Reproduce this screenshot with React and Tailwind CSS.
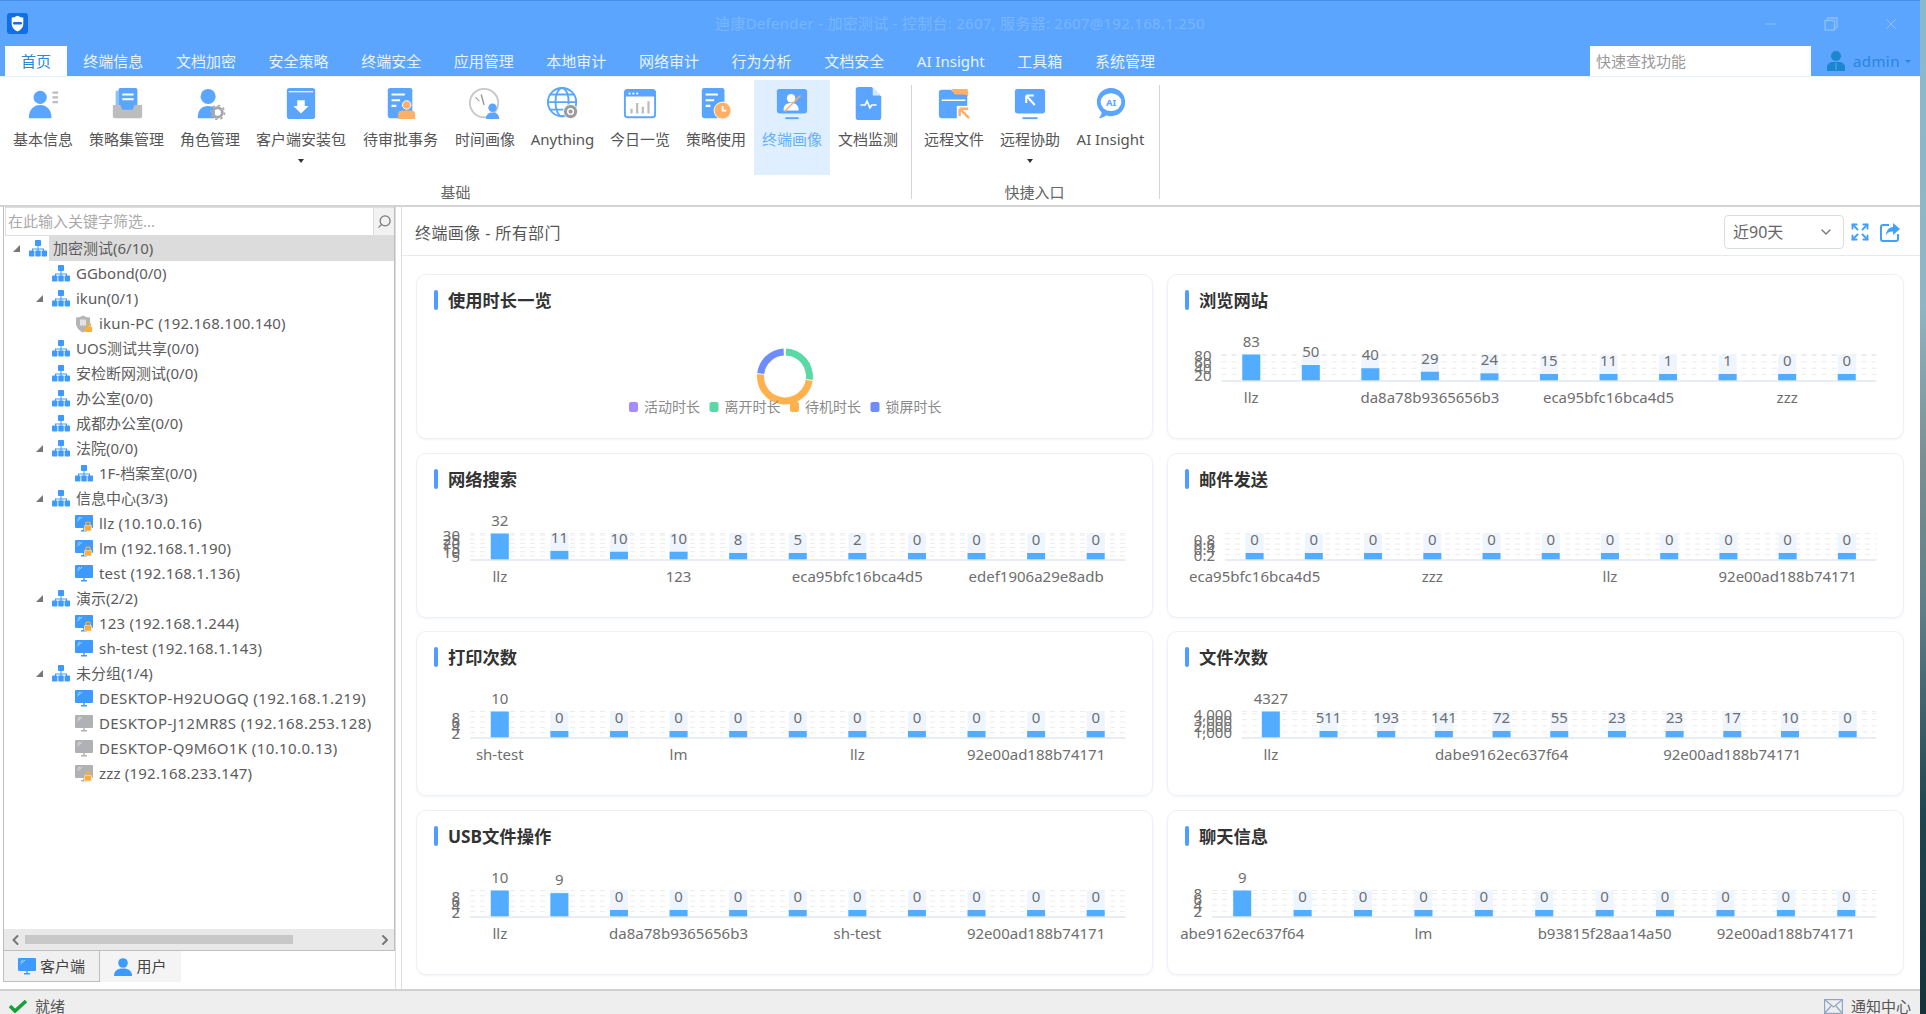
import { ChevronDown, Expand, ChevronLeft, ChevronRight, Search, Minus, X } from 'lucide-react';

const BLUE = '#5aa5ff';
const ORANGE = '#ffb066';
const GRAY = '#bdbdbd';

const menuTabs = ['终端信息', '文档加密', '安全策略', '终端安全', '应用管理', '本地审计', '网络审计', '行为分析', '文档安全', 'AI Insight', '工具箱', '系统管理'];

function PersonShape({ x = 0, y = 0, color = BLUE, s = 1 }) {
  return (
    <g transform={`translate(${x} ${y}) scale(${s})`} fill={color}>
      <circle cx="12" cy="8" r="7" />
      <path d="M0 30c0-9 5-14 12-14s12 5 12 14z" />
    </g>
  );
}

function Gear({ x, y, color = '#a8a8a8' }) {
  return (
    <g transform={`translate(${x} ${y})`}>
      <circle cx="0" cy="0" r="5" fill="none" stroke={color} strokeWidth="3" />
      <circle cx="0" cy="0" r="7.4" fill="none" stroke={color} strokeWidth="1.8" strokeDasharray="2.6 3.2" />
    </g>
  );
}

const ribbonIcons = {
  info: (
    <>
      <PersonShape x={3} y={3} s={1} />
      <path d="M28 6h6M28 11h6M28 16h6" stroke={GRAY} strokeWidth="2.4" />
    </>
  ),
  policy: (
    <>
      <rect x="9" y="1" width="20" height="24" rx="2" fill={BLUE} />
      <rect x="6" y="4" width="3" height="18" fill={BLUE} opacity="0.7" />
      <path d="M13 8h12M13 13h12" stroke="#fff" strokeWidth="2" />
      <path d="M3 19h8l2 5h11l2-5h8v12a2 2 0 0 1-2 2H5a2 2 0 0 1-2-2z" fill="#bdbdbd" />
    </>
  ),
  role: (
    <>
      <circle cx="16" cy="10" r="8" fill={BLUE} />
      <path d="M5 33c0-9 4-13 11-13 3 0 5 1 7 2v11z" fill={BLUE} />
      <Gear x={26} y={27} />
    </>
  ),
  package: (
    <>
      <path d="M3 4a3 3 0 0 1 3-3h24a3 3 0 0 1 3 3v27a3 3 0 0 1-3 3H6a3 3 0 0 1-3-3z" fill={BLUE} />
      <path d="M5 5h26" stroke="#fff" strokeWidth="1.2" />
      <path d="M14 14h8v6h4l-8 8-8-8h4z" fill="#fff" />
    </>
  ),
  approve: (
    <>
      <rect x="4" y="1" width="26" height="32" rx="2.5" fill={BLUE} />
      <path d="M8 8h14M8 14h9M8 20h5" stroke="#fff" strokeWidth="2.2" />
      <circle cx="24" cy="19" r="4.5" fill={ORANGE} stroke="#fff" strokeWidth="1" />
      <path d="M15 34v-5c0-3 2-4 5-4h8c3 0 5 1 5 4v5z" fill={ORANGE} />
    </>
  ),
  clock: (
    <>
      <circle cx="17" cy="17" r="15" fill="none" stroke="#c8c8c8" strokeWidth="2" />
      <path d="M14 8l3 11" stroke="#9a9a9a" strokeWidth="1.5" />
      <path d="M8 11l4 4" stroke="#9a9a9a" strokeWidth="1.2" />
      <circle cx="26" cy="22" r="4.5" fill={BLUE} />
      <path d="M19 34c0-5 3-7 7-7s7 2 7 7z" fill={BLUE} />
    </>
  ),
  globe: (
    <>
      <g fill="none" stroke={BLUE} strokeWidth="2">
        <circle cx="17" cy="16" r="15" />
        <ellipse cx="17" cy="16" rx="7" ry="15" />
        <path d="M2 16h30M4 8h26M4 24h26" />
      </g>
      <circle cx="26" cy="26" r="7.5" fill="#9b9b9b" stroke="#fff" />
      <circle cx="26" cy="26" r="3" fill="none" stroke="#fff" strokeWidth="1.5" />
    </>
  ),
  today: (
    <>
      <rect x="2" y="3" width="32" height="29" rx="3" fill="none" stroke={BLUE} strokeWidth="2" />
      <path d="M2 6a3 3 0 0 1 3-3h26a3 3 0 0 1 3 3v4H2z" fill={BLUE} />
      <circle cx="7" cy="7" r="1.2" fill="#fff" />
      <circle cx="11" cy="7" r="1.2" fill="#fff" />
      <circle cx="15" cy="7" r="1.2" fill="#fff" />
      <path d="M9 28v-5M15 28V17M21 28v-7M27 28V15" stroke="#bdbdbd" strokeWidth="2.4" />
    </>
  ),
  usage: (
    <>
      <rect x="3" y="1" width="24" height="32" rx="2.5" fill={BLUE} />
      <path d="M7 8h13M7 14h9M7 20h5" stroke="#fff" strokeWidth="2.2" />
      <circle cx="25" cy="25" r="9" fill={ORANGE} stroke="#fff" />
      <path d="M25 20v5h4" fill="none" stroke="#fff" strokeWidth="1.8" />
    </>
  ),
  portrait: (
    <>
      <rect x="2" y="2" width="32" height="26" rx="2.5" fill={BLUE} />
      <path d="M11 33h14" stroke={BLUE} strokeWidth="2" />
      <circle cx="17" cy="12" r="4.5" fill="#fff" />
      <path d="M9 25c0-6 3-8 8-8s8 2 8 8z" fill="#fff" />
      <path d="M10 26L27 9" stroke={ORANGE} strokeWidth="1.5" />
    </>
  ),
  monitorDoc: (
    <>
      <path d="M5 3a3 3 0 0 1 3-3h14l10 10v22a3 3 0 0 1-3 3H8a3 3 0 0 1-3-3z" fill={BLUE} />
      <path d="M23 0l9 9h-9z" fill="#d6e8ff" />
      <path d="M10 19h5l2-4 3 7 2-3h5" fill="none" stroke="#fff" strokeWidth="1.7" />
    </>
  ),
  remoteFile: (
    <>
      <path d="M16 2h15a2 2 0 0 1 2 2v6H16z" fill={ORANGE} />
      <path d="M2 6a3 3 0 0 1 3-3h10l4 5h10a3 3 0 0 1 3 3v19a3 3 0 0 1-3 3H5a3 3 0 0 1-3-3z" fill={BLUE} />
      <path d="M5 14h25" stroke="#fff" strokeWidth="1.6" />
      <rect x="21" y="20" width="15" height="15" fill="#fff" />
      <path d="M24 23h9M24 23v8M24 23l10 10" fill="none" stroke={ORANGE} strokeWidth="2.6" />
    </>
  ),
  remoteHelp: (
    <>
      <rect x="2" y="2" width="32" height="26" rx="2.5" fill={BLUE} />
      <path d="M10 33h16" stroke={BLUE} strokeWidth="2" />
      <path d="M14 9v8M14 9h8M14 9l9 10" fill="none" stroke="#fff" strokeWidth="2.2" />
    </>
  ),
  ai: (
    <>
      <path d="M18 1c9 0 15 7 15 15s-6 15-15 15c-2 0-3 0-5-1-2 2-5 3-8 3 2-2 3-4 3-6-3-3-5-7-5-11C3 8 9 1 18 1z" fill={BLUE} />
      <ellipse cx="18" cy="16" rx="11" ry="9.5" fill="#fff" />
      <text x="18" y="20" textAnchor="middle" fontSize="10" fontWeight="700" fill={BLUE}>AI</text>
    </>
  ),
};

function RibbonItem({ icon, label, menu, active, width }) {
  return (
    <div className={`flex h-[95px] flex-col items-center pt-[7px] ${width} ${active ? 'bg-[#e0efff]' : ''}`}>
      <svg width="36" height="34" viewBox="0 0 36 36">{ribbonIcons[icon]}</svg>
      <div className={`mt-[8px] whitespace-nowrap text-[15px] leading-[20px] ${active ? 'text-[#62b0ff]' : 'text-[#555]'}`}>{label}</div>
      {menu && <div className="mt-[10px] h-0 w-0 border-x-[3px] border-t-[4px] border-x-transparent border-t-[#333]" />}
    </div>
  );
}

function TreeIcon() {
  return (
    <svg width="18" height="17" viewBox="0 0 18 17" className="shrink-0" fill="#3d9bff">
      <rect x="6" y="0" width="6" height="6" rx="0.8" />
      <path d="M8.5 6h1v2.5H15V11h-1V9.5H9.5V11h-1V9.5H4V11H3V8.5h5.5z" />
      <rect x="0" y="10.5" width="5.4" height="6" rx="0.8" />
      <rect x="6.3" y="10.5" width="5.4" height="6" rx="0.8" />
      <rect x="12.6" y="10.5" width="5.4" height="6" rx="0.8" />
    </svg>
  );
}

function PcIcon({ color = '#3d9bff', lock }) {
  return (
    <svg width="18" height="17" viewBox="0 0 18 17" className="shrink-0">
      <rect x="0" y="0" width="18" height="13" rx="1" fill={color} />
      <path d="M2.5 6L7 2M2.5 4L5 2" stroke="#fff" strokeOpacity="0.65" strokeWidth="0.9" />
      <path d="M6 15.7h6M9 13v3" stroke={color} strokeWidth="1.4" />
      {lock && (
        <>
          <path d="M10.8 10.5V9a2.2 2.2 0 0 1 4.4 0v1.500" fill="none" stroke="#ffad33" strokeWidth="1.2" />
          <rect x="9.500" y="10.300" width="7" height="5.700" rx="0.8" fill="#ffad33" stroke="#fff" strokeWidth="0.5" />
        </>
      )}
    </svg>
  );
}

function ShieldIcon() {
  return (
    <svg width="18" height="18" viewBox="0 0 18 18" className="shrink-0">
      <path d="M1 2.500C4 2.500 6 1.500 8 .5c2 1 4 2 7 2v6c0 4-3 7-7 9-4-2-7-5-7-9z" fill="#b5b5b5" />
      <rect x="5" y="4.500" width="6" height="6" fill="#e3e3e3" />
      <rect x="10" y="11.500" width="7" height="5.500" rx="0.8" fill="#ffad33" />
      <path d="M11.500 11.500V10a2 2 0 0 1 4 0v1.500" fill="none" stroke="#ffad33" strokeWidth="1.100" />
    </svg>
  );
}

const treeRows = [
  { level: 0, arrow: true, kind: 'org', label: '加密测试(6/10)', selected: true },
  { level: 1, kind: 'org', label: 'GGbond(0/0)' },
  { level: 1, arrow: true, kind: 'org', label: 'ikun(0/1)' },
  { level: 2, kind: 'shield', label: 'ikun-PC (192.168.100.140)' },
  { level: 1, kind: 'org', label: 'UOS测试共享(0/0)' },
  { level: 1, kind: 'org', label: '安检断网测试(0/0)' },
  { level: 1, kind: 'org', label: '办公室(0/0)' },
  { level: 1, kind: 'org', label: '成都办公室(0/0)' },
  { level: 1, arrow: true, kind: 'org', label: '法院(0/0)' },
  { level: 2, kind: 'org', label: '1F-档案室(0/0)' },
  { level: 1, arrow: true, kind: 'org', label: '信息中心(3/3)' },
  { level: 2, kind: 'pc', lock: true, label: 'llz (10.10.0.16)' },
  { level: 2, kind: 'pc', lock: true, label: 'lm (192.168.1.190)' },
  { level: 2, kind: 'pc', label: 'test (192.168.1.136)' },
  { level: 1, arrow: true, kind: 'org', label: '演示(2/2)' },
  { level: 2, kind: 'pc', lock: true, label: '123 (192.168.1.244)' },
  { level: 2, kind: 'pc', label: 'sh-test (192.168.1.143)' },
  { level: 1, arrow: true, kind: 'org', label: '未分组(1/4)' },
  { level: 2, kind: 'pc', wide: true, label: 'DESKTOP-H92UOGQ (192.168.1.219)' },
  { level: 2, kind: 'pc', wide: true, gray: true, label: 'DESKTOP-J12MR8S (192.168.253.128)' },
  { level: 2, kind: 'pc', wide: true, gray: true, label: 'DESKTOP-Q9M6O1K (10.10.0.13)' },
  { level: 2, kind: 'pc', gray: true, lock: true, label: 'zzz (192.168.233.147)' },
];

const levelPad = ['pl-[6px]', 'pl-[29px]', 'pl-[52px]'];

function TreeRow({ row }) {
  let spacing = '';
  if (row.wide) spacing = 'tracking-[0.4px]';
  else if (row.kind !== 'org') spacing = 'tracking-[0.2px]';
  return (
    <div className={`flex h-[25px] items-center ${levelPad[row.level]}`}>
      <div className="flex w-3 shrink-0 justify-center">
        {row.arrow && (
          <svg width="7" height="7" viewBox="0 0 7 7">
            <polygon points="7,0 7,7 0,7" fill="#777" />
          </svg>
        )}
      </div>
      <div className="ml-[7px] flex w-[18px] shrink-0 justify-center">
        {row.kind === 'org' && <TreeIcon />}
        {row.kind === 'shield' && <ShieldIcon />}
        {row.kind === 'pc' && <PcIcon color={row.gray ? '#afb1b5' : '#3d9bff'} lock={row.lock} />}
      </div>
      <div className={`ml-[2px] flex h-[25px] flex-1 items-center whitespace-nowrap pl-[4px] text-[15px] text-[#5c5c5c] ${spacing} ${row.selected ? 'bg-[#dcdcdc]' : ''}`}>
        {row.label}
      </div>
    </div>
  );
}

function Sidebar() {
  return (
    <div className="flex w-[396px] shrink-0 flex-col border-r border-[#dcdcdc] pl-[3px]">
      <div className="flex h-[744px] w-[392px] flex-col border-x border-b border-[#bfbfbf]">
        <div className="flex h-[29px] shrink-0 pl-[1px]">
          <div className="flex flex-1 items-center border border-[#dedede] pl-[2px] text-[15px] text-[#aaa]">在此输入关键字筛选...</div>
          <div className="flex w-[20px] items-center justify-center border-y border-[#dedede] bg-[#f2f2f2]">
            <Search size={15} strokeWidth={2} className="-scale-x-100 text-[#777]" />
          </div>
        </div>
        <div className="flex-1 overflow-hidden">
          {treeRows.map((row) => (
            <TreeRow key={row.label} row={row} />
          ))}
        </div>
        <div className="flex h-[21px] shrink-0 items-center bg-[#e9e9e9]">
          <ChevronLeft size={16} strokeWidth={3} className="ml-[2px] w-[19px] text-[#777]" />
          <div className="h-[9px] w-[268px] bg-[#c8c8c8]" />
          <div className="flex-1" />
          <ChevronRight size={16} strokeWidth={3} className="mr-[1px] text-[#777]" />
        </div>
      </div>
      <div className="flex h-[31px]">
        <div className="flex w-[97px] items-center justify-center gap-[4px] border-x border-b border-[#bfbfbf] bg-[#f0f0f0] text-[15px] text-[#444]">
          <PcIcon color="#3d9bff" />
          客户端
        </div>
        <div className="flex w-[81px] items-center justify-center gap-[4px] bg-[#f4f4f4] text-[15px] text-[#444]">
          <svg width="18" height="18" viewBox="0 0 18 18" fill="#3d9bff">
            <circle cx="9" cy="5" r="4.800" />
            <path d="M0 18c0-5 3-7.500 9-7.500s9 2.500 9 7.500z" />
          </svg>
          用户
        </div>
      </div>
    </div>
  );
}

function polar(cx, cy, r, deg) {
  const a = ((deg - 90) * Math.PI) / 180;
  return [cx + r * Math.cos(a), cy + r * Math.sin(a)];
}

function arcPath(cx, cy, r1, r2, from, to) {
  const large = to - from > 180 ? 1 : 0;
  const [x1, y1] = polar(cx, cy, r2, from);
  const [x2, y2] = polar(cx, cy, r2, to);
  const [x3, y3] = polar(cx, cy, r1, to);
  const [x4, y4] = polar(cx, cy, r1, from);
  return `M${x1} ${y1}A${r2} ${r2} 0 ${large} 1 ${x2} ${y2}L${x3} ${y3}A${r1} ${r1} 0 ${large} 0 ${x4} ${y4}Z`;
}

const legend = [
  { name: '活动时长', color: '#a78bfa' },
  { name: '离开时长', color: '#5ad8a6' },
  { name: '待机时长', color: '#ffb14e' },
  { name: '锁屏时长', color: '#6d8cff' },
];

function Donut() {
  return (
    <svg viewBox="0 0 735 118" className="block h-[118px] w-full">
      <path d={arcPath(368, 57.5, 21, 28, 2, 97)} fill="#5ad8a6" />
      <path d={arcPath(368, 57.5, 21, 28, 99, 275)} fill="#ffb14e" />
      <path d={arcPath(368, 57.5, 21, 28, 277, 357)} fill="#6d8cff" />
      {legend.map((item, i) => (
        <g key={item.name}>
          <rect x={212 + i * 80.5} y={83} width={9} height={10} rx={2} fill={item.color} />
          <text x={227 + i * 80.5} y={87.5} fontSize="14" fill="#8a8a8a" dominantBaseline="central">
            {item.name}
          </text>
        </g>
      ))}
    </svg>
  );
}

const PLOT_TOP = 35.5;
const PLOT_BASE = 62;
const PLOT_END = 708.5;

function BarChart({ start, max, ticks, values, labels }) {
  const plotH = PLOT_BASE - PLOT_TOP;
  const cell = (PLOT_END - start) / values.length;
  return (
    <svg viewBox="0 0 735 118" className="block h-[118px] w-full">
      {ticks.map((t) => {
        const y = PLOT_BASE - (t.v / max) * plotH;
        return (
          <g key={t.label}>
            <line x1={start} x2={PLOT_END} y1={y} y2={y} stroke="#ececec" strokeDasharray="5 5" />
            <text x={start - 10} y={y} textAnchor="end" fontSize="15" fill="#6e6e6e" dominantBaseline="central">
              {t.label}
            </text>
          </g>
        );
      })}
      <line x1={start} x2={PLOT_END} y1={PLOT_TOP} y2={PLOT_TOP} stroke="#ececec" strokeDasharray="5 5" />
      {values.map((v, i) => {
        const cx = start + cell * (i + 0.5);
        const h = Math.max(7, (v / max) * plotH);
        const top = PLOT_BASE - h;
        return (
          <g key={i}>
            <rect x={cx - 9} y={PLOT_TOP} width={18} height={plotH} fill="#eef5ff" />
            <rect x={cx - 9} y={top} width={18} height={h} fill="#52acff" />
            <text x={cx} y={top - 14} textAnchor="middle" fontSize="15" fill="#6e6e6e" dominantBaseline="central">
              {v}
            </text>
          </g>
        );
      })}
      <line x1={start} x2={PLOT_END} y1={PLOT_BASE} y2={PLOT_BASE} stroke="#e0e6f1" strokeWidth="1.5" />
      {labels.map((l) => (
        <text key={l.i} x={start + cell * (l.i + 0.5)} y={PLOT_BASE + 15.5} textAnchor="middle" fontSize="15" fill="#6e6e6e" dominantBaseline="central">
          {l.text}
        </text>
      ))}
    </svg>
  );
}

const ZERO10 = [0, 0, 0, 0, 0, 0, 0, 0, 0, 0];
const t8642 = [
  { v: 2, label: '2' },
  { v: 4, label: '4' },
  { v: 6, label: '6' },
  { v: 8, label: '8' },
];

const cards = [
  { title: '使用时长一览', donut: true },
  {
    title: '浏览网站',
    start: 53.5,
    max: 83,
    ticks: [
      { v: 20, label: '20' },
      { v: 40, label: '40' },
      { v: 60, label: '60' },
      { v: 80, label: '80' },
    ],
    values: [83, 50, 40, 29, 24, 15, 11, 1, 1, 0, 0],
    labels: [
      { i: 0, text: 'llz' },
      { i: 3, text: 'da8a78b9365656b3' },
      { i: 6, text: 'eca95bfc16bca4d5' },
      { i: 9, text: 'zzz' },
    ],
  },
  {
    title: '网络搜索',
    start: 53,
    max: 32,
    ticks: [
      { v: 5, label: '5' },
      { v: 10, label: '10' },
      { v: 15, label: '15' },
      { v: 20, label: '20' },
      { v: 25, label: '25' },
      { v: 30, label: '30' },
    ],
    values: [32, 11, 10, 10, 8, 5, 2, 0, 0, 0, 0],
    labels: [
      { i: 0, text: 'llz' },
      { i: 3, text: '123' },
      { i: 6, text: 'eca95bfc16bca4d5' },
      { i: 9, text: 'edef1906a29e8adb' },
    ],
  },
  {
    title: '邮件发送',
    start: 57,
    max: 1,
    ticks: [
      { v: 0.2, label: '0.2' },
      { v: 0.4, label: '0.4' },
      { v: 0.6, label: '0.6' },
      { v: 0.8, label: '0.8' },
    ],
    values: [0, ...ZERO10],
    labels: [
      { i: 0, text: 'eca95bfc16bca4d5' },
      { i: 3, text: 'zzz' },
      { i: 6, text: 'llz' },
      { i: 9, text: '92e00ad188b74171' },
    ],
  },
  {
    title: '打印次数',
    start: 53,
    max: 10,
    ticks: t8642,
    values: [10, ...ZERO10],
    labels: [
      { i: 0, text: 'sh-test' },
      { i: 3, text: 'lm' },
      { i: 6, text: 'llz' },
      { i: 9, text: '92e00ad188b74171' },
    ],
  },
  {
    title: '文件次数',
    start: 74,
    max: 4327,
    ticks: [
      { v: 1000, label: '1,000' },
      { v: 2000, label: '2,000' },
      { v: 3000, label: '3,000' },
      { v: 4000, label: '4,000' },
    ],
    values: [4327, 511, 193, 141, 72, 55, 23, 23, 17, 10, 0],
    labels: [
      { i: 0, text: 'llz' },
      { i: 4, text: 'dabe9162ec637f64' },
      { i: 8, text: '92e00ad188b74171' },
    ],
  },
  {
    title: 'USB文件操作',
    start: 53,
    max: 10,
    ticks: t8642,
    values: [10, 9, 0, 0, 0, 0, 0, 0, 0, 0, 0],
    labels: [
      { i: 0, text: 'llz' },
      { i: 3, text: 'da8a78b9365656b3' },
      { i: 6, text: 'sh-test' },
      { i: 9, text: '92e00ad188b74171' },
    ],
  },
  {
    title: '聊天信息',
    start: 44,
    max: 9,
    ticks: t8642,
    values: [9, ...ZERO10],
    labels: [
      { i: 0, text: 'abe9162ec637f64' },
      { i: 3, text: 'lm' },
      { i: 6, text: 'b93815f28aa14a50' },
      { i: 9, text: '92e00ad188b74171' },
    ],
  },
];

function Card({ card }) {
  return (
    <div className="overflow-hidden rounded-[10px] border border-[#edf0f7] bg-white shadow-[0_1px_2px_rgba(90,110,160,0.08)]">
      <div className="mt-[15px] flex h-[20px] items-center pl-[17px]">
        <div className="h-[20px] w-[4px] rounded-[2px] bg-[#4f9dff]" />
        <div className="ml-[10px] pt-[2px] text-[17.3px] font-bold leading-[20px] text-[#333]">{card.title}</div>
      </div>
      <div className="mt-[9px]">{card.donut ? <Donut /> : <BarChart {...card} />}</div>
    </div>
  );
}

function Content() {
  return (
    <div className="ml-[5px] flex min-w-0 flex-1 flex-col border-l border-[#dcdcdc] bg-white">
      <div className="flex h-[49px] shrink-0 items-center border-b border-[#e3ecf4] pl-[13px] pr-[20px] pt-[2px]">
        <div className="flex-1 pt-[1px] text-[16px] tracking-[0.4px] text-[#555]">终端画像 - 所有部门</div>
        <div className="flex h-[34px] w-[120px] items-center justify-between rounded-[4px] border border-[#dcdcdc] pl-[8px] pr-[9px] text-[16px] text-[#666]">
          近90天
          <ChevronDown size={16} className="text-[#777]" />
        </div>
        <Expand size={20} strokeWidth={2.2} className="ml-[6px] text-[#42a0ff]" />
        <svg width="20" height="20" viewBox="0 0 20 20" className="ml-[10px]">
          <path d="M9 3H3a2 2 0 0 0-2 2v12a2 2 0 0 0 2 2h13a2 2 0 0 0 2-2v-5" fill="none" stroke="#42a0ff" strokeWidth="2" />
          <path d="M13 1l7 6-7 6V9.500c-4 0-6 1.500-7 4 0-5 3-8 7-8.500z" fill="#42a0ff" />
        </svg>
      </div>
      <div className="grid grid-cols-[737px_737px] auto-rows-[165px] gap-x-[14px] gap-y-[13.67px] pl-[14px] pt-[18px]">
        {cards.map((card) => (
          <Card key={card.title} card={card} />
        ))}
      </div>
    </div>
  );
}

function TitleBar() {
  return (
    <div className="grid h-[46px] shrink-0 grid-cols-[1fr_auto_1fr] items-center border-t border-[#4a8fe6] bg-[#5ba5ff]">
      <div className="pl-[7px]">
        <svg width="21" height="21" viewBox="0 0 21 21">
          <rect width="21" height="21" rx="3" fill="#0f6fe8" />
          <path d="M10.500 2.800c2.500 1.400 4.500 1.800 5.800 1.800v6.700c0 3.200-2.500 5.700-5.800 7.200-3.300-1.500-5.800-4-5.800-7.200V4.600c1.300 0 3.300-.4 5.800-1.800z" fill="#fff" />
          <rect x="6" y="9" width="9" height="2.600" rx="1" fill="#0f6fe8" />
        </svg>
      </div>
      <div className="text-[15px] tracking-[0.27px] text-[#79b6ff]">迪康Defender - 加密测试 - 控制台: 2607, 服务器: 2607@192.168.1.250</div>
      <div className="flex items-center justify-end gap-[44px] pr-[20px] text-[#8cc0ff]">
        <Minus size={18} strokeWidth={1.3} />
        <svg width="14" height="14" viewBox="0 0 14 14" fill="none" stroke="currentColor" strokeWidth="1.300">
          <rect x="1" y="3.500" width="9.500" height="9.500" />
          <path d="M3.500 3.500V1H13v9.500h-2.500" />
        </svg>
        <X size={18} strokeWidth={1.3} />
      </div>
    </div>
  );
}

function MenuBar() {
  return (
    <div className="flex h-[30px] shrink-0 bg-[#5ba5ff] pl-[5px]">
      <div className="flex items-center bg-white px-4 text-[15px] text-[#2b86d8]">首页</div>
      {menuTabs.map((name) => (
        <div key={name} className="flex items-center whitespace-nowrap px-[16.3px] text-[15px] text-[#e9f3ff]">
          {name}
        </div>
      ))}
      <div className="flex-1" />
      <div className="flex w-[221px] items-center bg-white pl-[6px] text-[15px] text-[#999]">快速查找功能</div>
      <div className="flex w-[109px] items-center pl-[16px] text-[15px] tracking-[0.4px] text-[#2a84dc]">
        <svg width="18" height="20" viewBox="0 0 18 20" fill="#1c86cf">
          <circle cx="9" cy="5" r="5" />
          <path d="M0 20v-4c0-3 3-5 6-5h6c3 0 6 2 6 5v4z" />
          <path d="M8.500 12h1v7h-1z" fill="#5ba5ff" />
        </svg>
        <span className="ml-[8px]">admin</span>
        <div className="ml-[5px] h-0 w-0 border-x-[3px] border-t-[3px] border-x-transparent border-t-[#2a84dc]" />
      </div>
    </div>
  );
}

function Ribbon() {
  return (
    <div className="flex h-[131px] shrink-0 items-start border-t border-[#e8f0fa] border-b-2 border-b-[#d4d4d4] bg-white pl-[5px] pt-[3px]">
      <div className="flex flex-col">
        <div className="flex">
          <RibbonItem icon="info" label="基本信息" width="w-[76px]" />
          <RibbonItem icon="policy" label="策略集管理" width="w-[91px]" />
          <RibbonItem icon="role" label="角色管理" width="w-[76px]" />
          <RibbonItem icon="package" label="客户端安装包" width="w-[106px]" menu />
          <RibbonItem icon="approve" label="待审批事务" width="w-[93px]" />
          <RibbonItem icon="clock" label="时间画像" width="w-[76px]" />
          <RibbonItem icon="globe" label="Anything" width="w-[79px]" />
          <RibbonItem icon="today" label="今日一览" width="w-[76px]" />
          <RibbonItem icon="usage" label="策略使用" width="w-[76px]" />
          <RibbonItem icon="portrait" label="终端画像" width="w-[76px]" active />
          <RibbonItem icon="monitorDoc" label="文档监测" width="w-[76px]" />
        </div>
        <div className="mt-[7px] text-center text-[15px] leading-[20px] text-[#666]">基础</div>
      </div>
      <div className="ml-[5px] mt-[5px] h-[114px] w-px bg-[#d4d4d4]" />
      <div className="ml-[4px] flex flex-col">
        <div className="flex">
          <RibbonItem icon="remoteFile" label="远程文件" width="w-[76px]" />
          <RibbonItem icon="remoteHelp" label="远程协助" width="w-[76px]" menu />
          <RibbonItem icon="ai" label="AI Insight" width="w-[85px]" />
        </div>
        <div className="mt-[7px] text-center text-[15px] leading-[20px] text-[#666]">快捷入口</div>
      </div>
      <div className="ml-[6px] mt-[5px] h-[114px] w-px bg-[#d4d4d4]" />
    </div>
  );
}

function StatusBar() {
  return (
    <div className="flex h-[25px] shrink-0 items-start justify-between overflow-hidden border-t-2 border-[#d0d0d0] bg-[#eeeeee] pl-[9px] pr-[9px] pt-[7px] text-[15px] leading-[16px] text-[#555]">
      <div className="flex items-center">
        <svg width="18" height="14" viewBox="0 0 18 14">
          <path d="M1 7l5 5L17 2" fill="none" stroke="#14a03c" strokeWidth="3.600" />
        </svg>
        <span className="ml-[8px]">就绪</span>
      </div>
      <div className="flex items-center">
        <svg width="19" height="15" viewBox="0 0 19 15" fill="none" stroke="#8fa5c8" strokeWidth="1.200">
          <rect x="0.600" y="0.600" width="17.800" height="13.800" />
          <path d="M1 1l8.500 7L18 1M1 14l6-7M18 14l-6-7" />
        </svg>
        <span className="ml-[8px]">通知中心</span>
      </div>
    </div>
  );
}

export default function App() {
  return (
    <div className="flex h-screen w-full overflow-hidden bg-white [font-family:'Noto_Sans','Noto_Sans_CJK_SC',sans-serif]">
      <div className="flex min-w-0 flex-1 flex-col">
        <TitleBar />
        <MenuBar />
        <Ribbon />
        <div className="flex min-h-0 flex-1">
          <Sidebar />
          <Content />
        </div>
        <StatusBar />
      </div>
      <div className="w-[6px] shrink-0 bg-[linear-gradient(180deg,#8ab9cc_0%,#8fb5c4_30%,#7a8f92_45%,#5f7f88_60%,#1f4550_80%,#16323a_100%)]" />
    </div>
  );
}
